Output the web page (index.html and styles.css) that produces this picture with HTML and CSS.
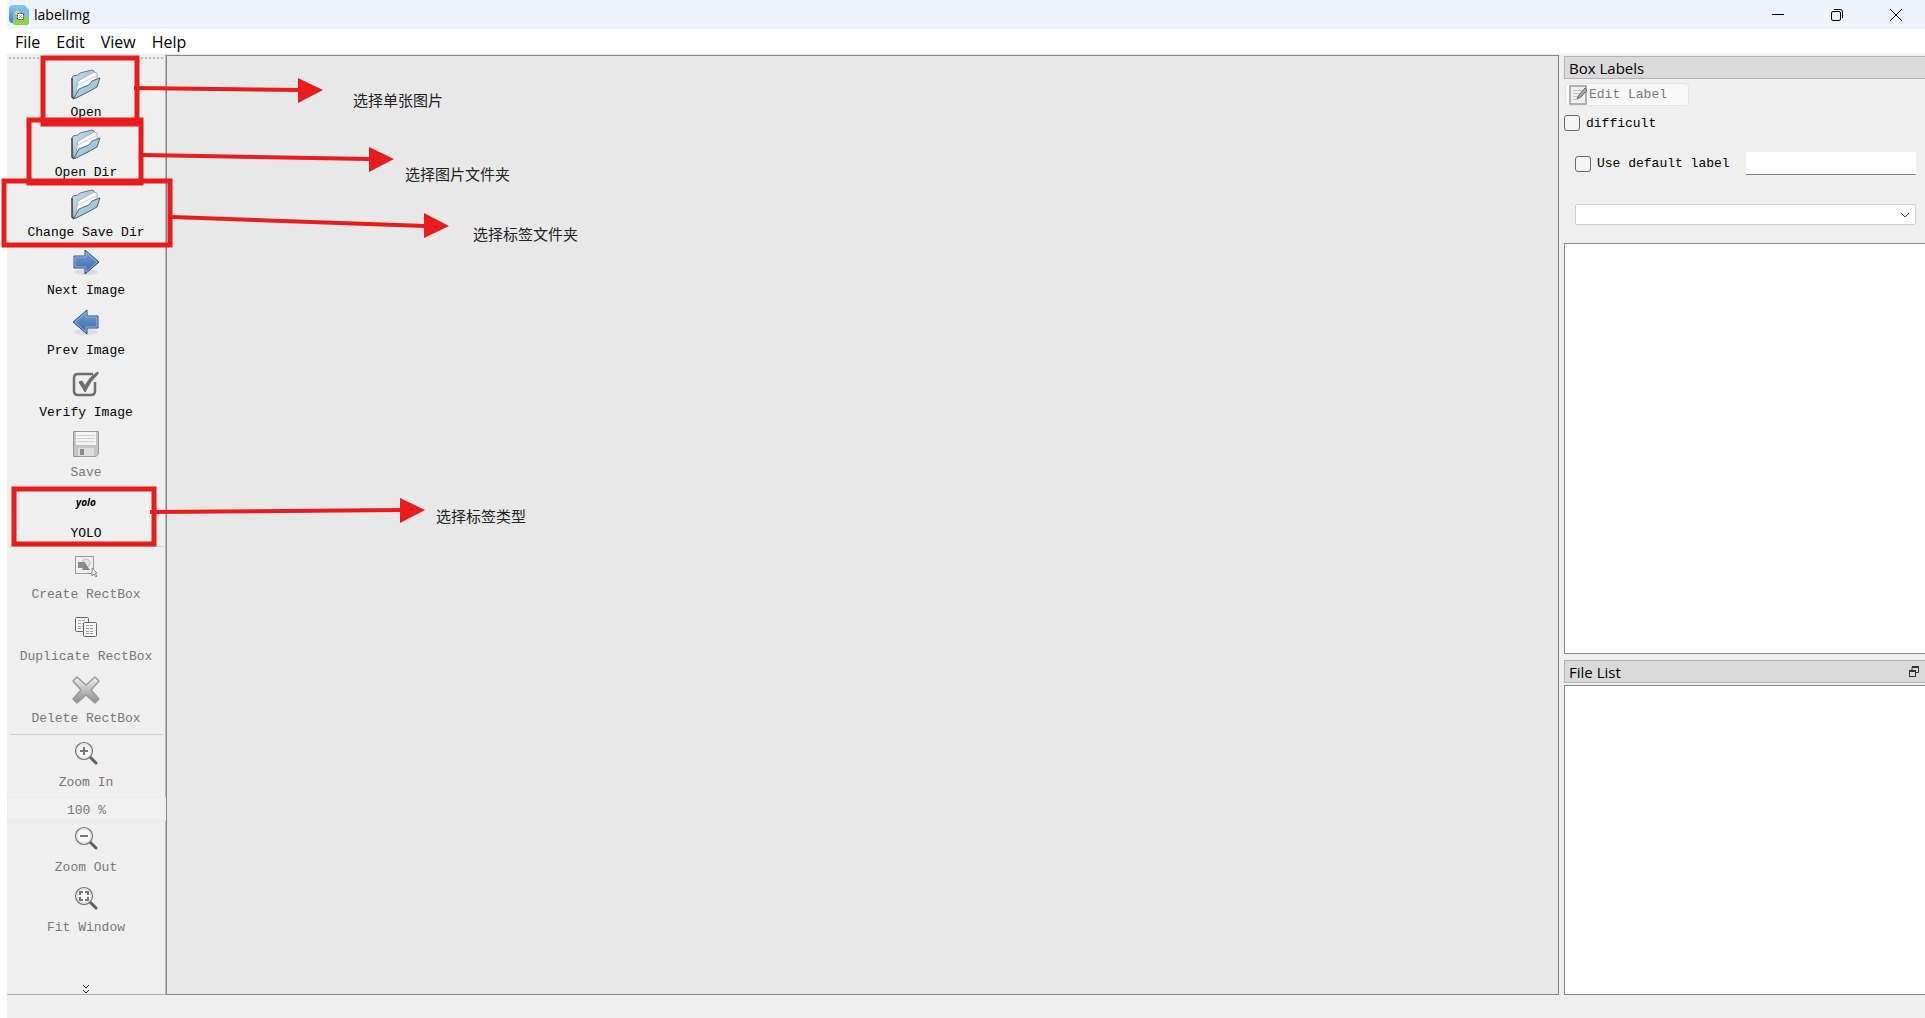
FILE: index.html
```html
<!DOCTYPE html>
<html lang="zh-CN">
<head>
  <meta charset="UTF-8" />
  <meta name="viewport" content="width=device-width, initial-scale=1.0" />
  <title>labelImg</title>
  <link rel="stylesheet" href="styles.css">
</head>
<body>
  <svg class="defs" width="0" height="0" aria-hidden="true">
    <defs>
      <linearGradient id="paper_blue" x1="0" y1="0" x2="1" y2="1">
        <stop offset="0" stop-color="#c8e2f0" />
        <stop offset="1" stop-color="#7fb3d0" />
      </linearGradient>
      <linearGradient id="logo_blue" x1="0" y1="0" x2="0" y2="1">
        <stop offset="0" stop-color="#8cc8ee" />
        <stop offset="1" stop-color="#3f7fb6" />
      </linearGradient>
      <linearGradient id="arrow_blue" x1="0" y1="0" x2="0" y2="1">
        <stop offset="0" stop-color="#7ba3d6" />
        <stop offset="1" stop-color="#3465a4" />
      </linearGradient>
      <linearGradient id="grey_fade" x1="0" y1="0" x2="0" y2="1">
        <stop offset="0" stop-color="#f2f2f2" />
        <stop offset="1" stop-color="#8c8c8c" />
      </linearGradient>
      <symbol id="icon_folder" viewBox="0 0 32 32">
        <path d="M2 10 L3 8 L8 7 L10 5 L18 3 L22 2 L24 3 L25 9 L6 30 L3 30 Z" fill="url(#paper_blue)" stroke="#6a7880" />
        <path d="M7 18 L8 13 L24 4 L27 5 L27 13 L8 24 L6 27 Z" fill="#fafafa" stroke="#b0b4b6" />
        <path d="M8 17 L26 8" stroke="#cfcfcf" fill="none" />
        <path d="M4 30 L9 21 L19 17 L22 13 L30 10 L27 19 L18 24 L6 30 Z" fill="url(#paper_blue)" stroke="#56646c" />
        <path d="M2 10 L2 29 L4 31" fill="none" stroke="#3f4a50" stroke-width="1.500" />
      </symbol>
      <symbol id="icon_arrow" viewBox="0 0 32 32">
        <ellipse cx="16" cy="26" rx="12" ry="3" fill="#dcdcdc" />
        <path d="M4 10 H15 V4 L29 16 L15 28 V22 H4 Z" fill="url(#arrow_blue)" stroke="#2c4d80" />
        <path d="M5 11 H16 V6 L27 16 L16 26 V21 H5 Z" fill="none" stroke="#93b3dd" />
      </symbol>
      <symbol id="icon_glass" viewBox="0 0 32 32">
        <path d="M20 20 L26 26" stroke="#606060" stroke-width="3" stroke-linecap="round" />
        <circle cx="14" cy="14" r="8.500" fill="#f7f7f7" stroke="#707070" stroke-width="1.200" />
        <circle cx="14" cy="14" r="7" fill="none" stroke="#d8d8d8" />
      </symbol>
    </defs>
  </svg>

  <div class="window">
    <header class="titlebar">
      <svg class="titlebar__logo" width="20" height="20" viewBox="0 0 20 20">
        <rect x="0" y="0" width="18" height="18" rx="4" fill="url(#logo_blue)" />
        <rect x="4" y="3" width="16" height="17" rx="3" fill="#7dbbe6" />
        <path d="M4 17 L9 12 L12 14 L15 9 L20 15 V18 Q20 20 18 20 H7 Q4 20 4 17 Z" fill="#8fd14f" />
        <circle cx="8" cy="8" r="2" fill="#f5e14a" />
        <rect x="8.500" y="8.500" width="6" height="6" fill="#fff" stroke="#444" stroke-dasharray="2 1" />
        <path d="M10 10 L13 13 M13 10 L10 13" stroke="#aaa" />
      </svg>
      <h1 class="titlebar__name">labelImg</h1>
      <div class="titlebar__controls">
        <button type="button" aria-label="Minimize">
          <svg width="14" height="14" viewBox="0 0 14 14"><path d="M1 6.500 H13" stroke="#000" /></svg>
        </button>
        <button type="button" aria-label="Restore">
          <svg width="14" height="14" viewBox="0 0 14 14" fill="none" stroke="#000"><rect x="1.500" y="3.500" width="9" height="9" rx="1.500" /><path d="M4 1.500 H10 Q12.500 1.500 12.500 4 V10" /></svg>
        </button>
        <button type="button" aria-label="Close">
          <svg width="14" height="14" viewBox="0 0 14 14"><path d="M1 1 L13 13 M13 1 L1 13" stroke="#000" /></svg>
        </button>
      </div>
    </header>

    <nav class="menubar">
      <button type="button">File</button>
      <button type="button">Edit</button>
      <button type="button">View</button>
      <button type="button">Help</button>
    </nav>

    <main class="workspace">
      <div class="toolbar">
        <div class="toolbar__handle"></div>
        <button type="button" class="tool">
          <svg class="tool__icon"><use href="#icon_folder" /></svg>
          <span>Open</span>
        </button>
        <button type="button" class="tool">
          <svg class="tool__icon"><use href="#icon_folder" /></svg>
          <span>Open Dir</span>
        </button>
        <button type="button" class="tool tool--short">
          <svg class="tool__icon"><use href="#icon_folder" /></svg>
          <span>Change Save Dir</span>
        </button>
        <button type="button" class="tool">
          <svg class="tool__icon"><use href="#icon_arrow" /></svg>
          <span>Next Image</span>
        </button>
        <button type="button" class="tool tool--tall">
          <svg class="tool__icon tool__icon--flip"><use href="#icon_arrow" /></svg>
          <span>Prev Image</span>
        </button>
        <button type="button" class="tool">
          <svg class="tool__icon" viewBox="0 0 32 32" fill="none" stroke="#6e6e6e">
            <path d="M23 6 H8 Q4 6 4 10 V23 Q4 27 8 27 H21 Q25 27 25 23 V14" stroke-width="2.500" />
            <path d="M9 14 L12 13 L15 18 Q20 8 28 4 L28 6 Q20 13 15 24 Z" fill="#6e6e6e" stroke-width="1" />
          </svg>
          <span>Verify Image</span>
        </button>
        <button type="button" class="tool tool--short" disabled>
          <svg class="tool__icon" viewBox="0 0 32 32">
            <path d="M3.500 3.500 H28.500 V26 L26 28.500 H3.500 Z" fill="#c4c4c4" stroke="#999" />
            <rect x="6" y="4" width="20" height="13" fill="#f4f4f4" />
            <path d="M7 7.500 H25 M7 10.500 H25 M7 13.500 H25" stroke="#d2d2d2" />
            <rect x="8" y="20" width="16" height="8" fill="#dedede" />
            <rect x="10" y="21" width="4" height="6" fill="#8a8a8a" />
          </svg>
          <span>Save</span>
        </button>
        <button type="button" class="tool">
          <span class="tool__icon tool__icon--text">yolo</span>
          <span>YOLO</span>
        </button>
        <hr class="toolbar__line" />
        <button type="button" class="tool tool--tall" disabled>
          <svg class="tool__icon" viewBox="0 1 32 32">
            <rect x="5.500" y="7.500" width="18" height="17" fill="#efefef" stroke="#444" stroke-dasharray="1 1" />
            <circle cx="16" cy="14" r="4" fill="#e2e2e2" stroke="#c0c0c0" />
            <rect x="8" y="13" width="7" height="6" fill="#8c8c8c" />
            <path d="M12 21 L15 14 L20 21 Z" fill="#858585" />
            <path d="M22 19 L22 27 L24 25 L26 28 L27 27 L25 24 L27 24 Z" fill="#f5f5f5" stroke="#888" />
          </svg>
          <span>Create RectBox</span>
        </button>
        <button type="button" class="tool tool--tall" disabled>
          <svg class="tool__icon" viewBox="0 1 32 32" stroke="#666">
            <rect x="5.500" y="6.500" width="13" height="14" rx="1" fill="#f5f5f5" />
            <path d="M8 9.500 H16 M8 12.500 H16 M8 15.500 H16 M8 17.500 H16" stroke="#aaa" stroke-dasharray="3 1" />
            <rect x="13.500" y="11.500" width="13" height="14" rx="1" fill="#f8f8f8" />
            <path d="M16 14.500 H24 M16 17.500 H24 M16 20.500 H24 M16 22.500 H24" stroke="#999" stroke-dasharray="3 1" />
          </svg>
          <span>Duplicate RectBox</span>
        </button>
        <button type="button" class="tool" disabled>
          <svg class="tool__icon" viewBox="0 0 32 32">
            <path d="M7 3 L16 11 L25 3 L29 7 L21 16 L29 25 L25 29 L16 21 L7 29 L3 25 L11 16 L3 7 Z" fill="url(#grey_fade)" stroke="#999" stroke-width="1.500" stroke-linejoin="round" />
          </svg>
          <span>Delete RectBox</span>
        </button>
        <hr class="toolbar__line" />
        <button type="button" class="tool" disabled>
          <svg class="tool__icon" viewBox="0 1 32 32">
            <use href="#icon_glass" width="32" height="32" />
            <path d="M10 14 H18 M14 10 V18" stroke="#777" stroke-width="2" />
          </svg>
          <span>Zoom In</span>
        </button>
        <input class="toolbar__zoom" type="text" value="100 %" aria-label="Zoom level" disabled />
        <button type="button" class="tool" disabled>
          <svg class="tool__icon" viewBox="0 1 32 32">
            <use href="#icon_glass" width="32" height="32" />
            <path d="M10 14 H18" stroke="#777" stroke-width="2" />
          </svg>
          <span>Zoom Out</span>
        </button>
        <button type="button" class="tool" disabled>
          <svg class="tool__icon" viewBox="0 1 32 32">
            <use href="#icon_glass" width="32" height="32" />
            <path d="M10 13 V10 H13 M15 10 H18 V13 M18 15 V18 H15 M13 18 H10 V15" stroke="#777" stroke-width="2" fill="none" />
          </svg>
          <span>Fit Window</span>
        </button>
        <button type="button" class="toolbar__more" aria-label="More tools">
          <svg width="8" height="10" viewBox="0 0 8 10" fill="none" stroke="#222"><path d="M1 1 L4 4 L7 1 M1 6 L4 9 L7 6" /></svg>
        </button>
      </div>

      <section class="canvas" aria-label="Image"></section>

      <aside class="docks">
        <section class="dock dock--labels">
          <h2 class="dock__title">Box Labels</h2>
          <button type="button" class="edit__btn" disabled>
            <svg width="20" height="20" viewBox="0 0 20 20">
              <rect x="1" y="1" width="16" height="18" fill="#f0f0f0" stroke="#999" stroke-width="1.500" />
              <path d="M4 5.500 H13 M4 8.500 H11 M4 11.500 H9 M4 14.500 H8" stroke="#c2c2c2" />
              <path d="M8 14 L10 10 L16 3 L18 5 L12 12 Z" fill="#aaa" stroke="#666" />
            </svg>
            <span>Edit Label</span>
          </button>
          <div class="check">
            <input type="checkbox" id="difficult" />
            <label for="difficult">difficult</label>
          </div>
          <div class="dock__form">
            <div class="check">
              <input type="checkbox" id="use_default" />
              <label for="use_default">Use default label</label>
              <input class="default__input" type="text" aria-label="Default label" />
            </div>
            <div class="combo">
              <select aria-label="Filter labels"><option></option></select>
              <svg class="combo__arrow" width="10" height="6" viewBox="0 0 10 6"><path d="M1 1 L5 5 L9 1" fill="none" stroke="#444" /></svg>
            </div>
          </div>
          <div class="list"></div>
        </section>
        <section class="dock dock--files">
          <h2 class="dock__title">
            File List
            <button type="button" class="dock__float" aria-label="Float">
              <svg width="10" height="11" viewBox="0 0 10 11" fill="none" stroke="#333"><path d="M3 4 V1.500 H9.500 V6.500 H7" /><path d="M3 1 H10" stroke-width="2" /><rect x=".5" y="5.500" width="6" height="5" /><path d="M0 5 H7" stroke-width="2" /></svg>
            </button>
          </h2>
          <div class="list"></div>
        </section>
      </aside>
    </main>

    <footer class="statusbar"></footer>
  </div>

  <!-- guide marks drawn over the window -->
  <svg class="notes">
    <g class="notes__box">
      <rect x="43" y="58" width="94" height="66" />
      <rect x="29" y="120" width="112" height="63" />
      <rect x="4" y="181" width="166" height="64" />
      <rect x="14" y="489" width="140" height="55" />
    </g>
    <g class="notes__line">
      <path d="M134 88 L300 90" />
      <path d="M143 155 L370 159" />
      <path d="M172 217 L425 226" />
      <path d="M150 512 L401 510" />
    </g>
    <g class="notes__head">
      <path d="M298 78 L323 90 L298 103 Z" />
      <path d="M369 147 L394 159 L369 172 Z" />
      <path d="M424 213 L449 226 L424 238 Z" />
      <path d="M400 498 L425 510 L400 523 Z" />
    </g>
    <g class="notes__text">
      <text x="353" y="106">选择单张图片</text>
      <text x="405" y="180">选择图片文件夹</text>
      <text x="473" y="240">选择标签文件夹</text>
      <text x="436" y="522">选择标签类型</text>
    </g>
  </svg>
</body>
</html>
```
FILE: styles.css
```css
* {
  box-sizing: border-box;
}

body {
  margin: 0;
  position: relative;
  background-color: #fff;
  color: #000;
  font-family: "Open Sans", "Noto Sans CJK SC", sans-serif;
  font-size: 15px;
}

button,
input,
select {
  margin: 0;
  padding: 0;
  border: none;
  background: none;
  color: inherit;
  font: inherit;
}

h1,
h2 {
  margin: 0;
  font-weight: 400;
}

.defs {
  position: absolute;
}

.window {
  display: flex;
  flex-direction: column;
  min-height: 100vh;
  margin-left: 7px;
  background-color: #efefef;
}

/* title bar */
.titlebar {
  display: flex;
  align-items: center;
  height: 29px;
  padding-left: 2px;
  background-color: #eef2fa;
}

.titlebar__name {
  flex: 1;
  margin-left: 5px;
  font-size: 14px;
  line-height: 20px;
}

.titlebar__controls {
  display: flex;
}

.titlebar__controls button {
  display: flex;
  align-items: center;
  justify-content: center;
  width: 59px;
  height: 28px;
}

.menubar {
  display: flex;
  gap: 16px;
  height: 25px;
  padding-left: 8px;
  background-color: #fff;
}

.menubar button {
  font-size: 16px;
  line-height: 26px;
}

.workspace {
  display: flex;
  flex: 1;
}

/* toolbar */
.toolbar {
  display: flex;
  flex-direction: column;
  width: 159px;
  border-right: 1px solid #b8b8b8;
  border-bottom: 1px solid #b0b0b0;
  font-family: "Liberation Mono", monospace;
  font-size: 13px;
}

.toolbar__handle {
  height: 2px;
  margin: 3px 2px 7px;
  background: repeating-linear-gradient(90deg, #bdbdbd 0 2px, transparent 2px 4px);
}

.tool {
  display: flex;
  flex-direction: column;
  align-items: center;
  height: 60px;
  line-height: 18px;
  white-space: nowrap;
}

.tool--short {
  height: 58px;
}

.tool--tall {
  height: 62px;
}

.tool:disabled,
.toolbar__zoom:disabled,
.edit__btn:disabled {
  color: #787878;
}

.tool__icon {
  flex: none;
  width: 32px;
  height: 32px;
  margin: 2px 0 4px;
}

.tool__icon--flip {
  transform: scaleX(-1);
}

.tool__icon--text {
  margin-bottom: 7px;
  font-family: "Open Sans", sans-serif;
  font-size: 10px;
  font-style: italic;
  font-weight: 700;
  line-height: 32px;
  text-align: center;
}

.toolbar__line {
  width: 153px;
  height: 1px;
  margin: 2px 3px 1px;
  border: none;
  background-color: #cfcfcf;
}

.toolbar__zoom {
  height: 24px;
  margin: 1px -1px 0 0;
  padding-top: 2px;
  border: 1px solid #eaeaea;
  background-color: #f0f0f0;
  text-align: center;
}

.toolbar__more {
  display: flex;
  justify-content: center;
  margin-top: auto;
}

.canvas {
  flex: 1;
  margin-top: 1px;
  border: 1px solid #828790;
  background-color: #e8e8e8;
}

/* right side docks */
.docks {
  display: flex;
  flex-direction: column;
  gap: 6px;
  width: 361px;
  margin: 2px 0 0 5px;
}

.dock {
  display: flex;
  flex-direction: column;
}

.dock--labels {
  flex: 4 0 352px;
  font-family: "Liberation Mono", monospace;
  font-size: 13px;
}

.dock--files {
  flex: 3 0 150px;
}

.dock__title {
  display: flex;
  align-items: center;
  justify-content: space-between;
  height: 23px;
  padding: 0 6px 0 4px;
  border: 1px solid #b4b4b4;
  border-right: none;
  background-color: #dadada;
  font-family: "Open Sans", sans-serif;
  font-size: 15px;
}

.dock__float {
  display: flex;
}

.edit__btn {
  display: flex;
  align-items: center;
  width: 124px;
  height: 23px;
  margin: 4px 0 9px 1px;
  padding-left: 3px;
  border: 1px solid #e4e4e4;
  border-radius: 4px;
  background-color: #f8f8f8;
}

.check {
  display: flex;
  align-items: center;
}

.check input[type="checkbox"] {
  appearance: none;
  width: 16px;
  height: 16px;
  margin-right: 6px;
  border: 1px solid #666;
  border-radius: 3px;
  background-color: #f5f5f5;
}

.dock__form {
  display: flex;
  flex-direction: column;
  gap: 29px;
  margin: 21px 9px 18px 11px;
}

.default__input {
  flex: 1;
  height: 23px;
  margin-left: 16px;
  border-bottom: 1px solid #868686;
  background-color: #fff;
}

.combo {
  position: relative;
}

.combo select {
  display: block;
  appearance: none;
  width: 100%;
  height: 21px;
  border: 1px solid #cfcfcf;
  border-radius: 2px;
  background-color: #fdfdfd;
}

.combo__arrow {
  position: absolute;
  top: 8px;
  right: 6px;
  pointer-events: none;
}

.list {
  flex: 1;
  border: 1px solid #828790;
  border-right: none;
  background-color: #fff;
}

.dock--files .list {
  margin-top: 2px;
}

.statusbar {
  height: 23px;
}

/* guide marks */
.notes {
  position: absolute;
  top: 0;
  left: 0;
  width: 100%;
  height: 100%;
  pointer-events: none;
}

.notes__box,
.notes__line {
  fill: none;
  stroke: #e81c1c;
  stroke-width: 5px;
}

.notes__line {
  stroke-width: 4px;
}

.notes__head {
  fill: #e81c1c;
}

.notes__text {
  fill: #222;
  font-family: "Noto Sans CJK SC", sans-serif;
  font-size: 15px;
}
```
